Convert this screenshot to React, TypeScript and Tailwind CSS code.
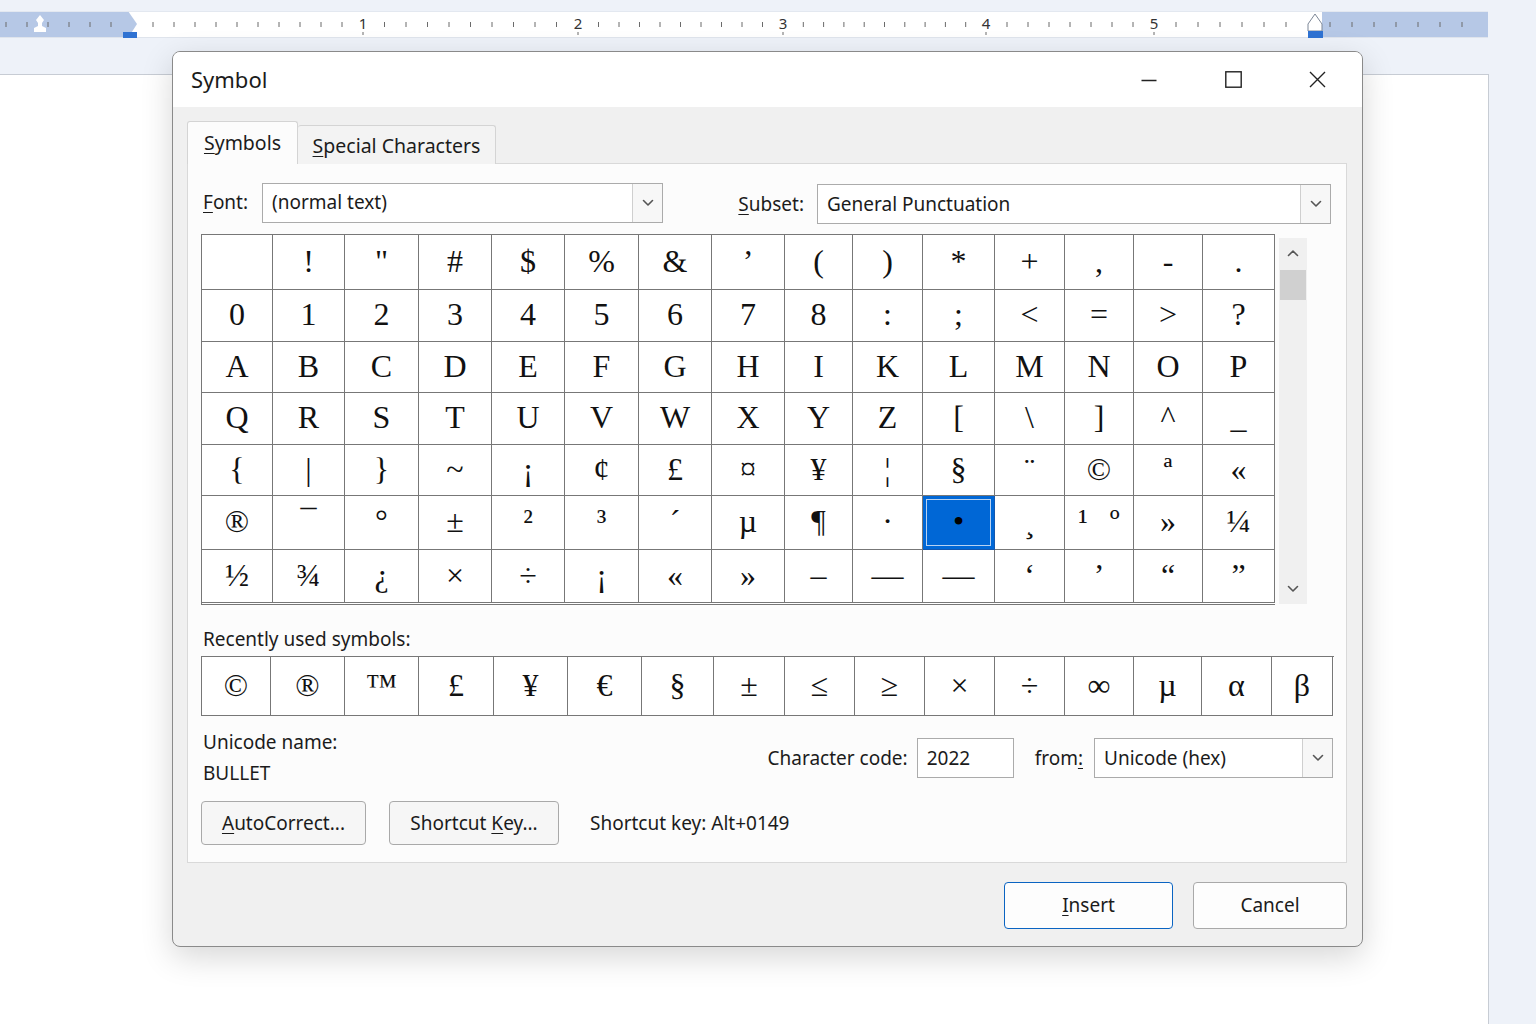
import React from 'react';

const rows: string[][] = [
  ['', '!', '"', '#', '$', '%', '&', '’', '(', ')', '*', '+', ',', '-', '.'],
  ['0', '1', '2', '3', '4', '5', '6', '7', '8', ':', ';', '<', '=', '>', '?'],
  ['A', 'B', 'C', 'D', 'E', 'F', 'G', 'H', 'I', 'K', 'L', 'M', 'N', 'O', 'P'],
  ['Q', 'R', 'S', 'T', 'U', 'V', 'W', 'X', 'Y', 'Z', '[', '\\', ']', '^', '_'],
  ['{', '|', '}', '~', '¡', '¢', '£', '¤', '¥', '¦', '§', '¨', '©', 'ª', '«'],
  ['®', '¯', '°', '±', '²', '³', '´', 'µ', '¶', '·', '•', '¸', '¹º', '»', '¼'],
  ['½', '¾', '¿', '×', '÷', '¡', '«', '»', '–', '—', '—', '‘', '’', '“', '”'],
];

const recent = ['©', '®', '™', '£', '¥', '€', '§', '±', '≤', '≥', '×', '÷', '∞', 'µ', 'α', 'β'];

const Key = ({ children }: { children: React.ReactNode }) => (
  <span className="underline decoration-1 underline-offset-[3px]">{children}</span>
);

const Chevron = ({ up = false }: { up?: boolean }) => (
  <svg width="12" height="8" viewBox="0 0 12 8" fill="none">
    <path d={up ? 'M1.5 6.5 L6 2 L10.5 6.5' : 'M1.5 1.5 L6 6 L10.5 1.5'} stroke="#555" strokeWidth="1.6" strokeLinecap="round" strokeLinejoin="round" />
  </svg>
);

const Combo = ({ value, className }: { value: string; className: string }) => (
  <div className={`flex h-[40px] items-stretch border border-[#ababab] bg-white ${className}`}>
    <div className="flex flex-1 items-center pl-[9px] text-[19px] text-[#1b1b1b]">{value}</div>
    <div className="flex w-[30px] items-center justify-center border-l border-[#cfcfcf] bg-[#f7f7f7]">
      <Chevron />
    </div>
  </div>
);

const Ruler = () => {
  const nums: [number, string][] = [[363, '1'], [578, '2'], [783, '3'], [986, '4'], [1154, '5']];
  const ticks: number[] = [];
  for (let k = 1; k <= 17; k++) ticks.push(363 - 21 * k);
  const segs: [number, number, number][] = [[363, 578, 10], [578, 783, 10], [783, 986, 10], [986, 1154, 8]];
  segs.forEach(([a, b, n]) => {
    for (let i = 1; i < n; i++) ticks.push(a + ((b - a) * i) / n);
  });
  for (let k = 1; k <= 15; k++) ticks.push(1154 + 22 * k);
  const shown = ticks.filter(
    (x) => x > 4 && x < 1484 && Math.abs(x - 137) > 8 && Math.abs(x - 1315) > 9 && Math.abs(x - 40) > 7
  );
  return (
    <svg width="1488" height="27" viewBox="0 0 1488 27" className="block">
      <rect x="0" y="0" width="1488" height="27" fill="#ffffff" />
      <path d="M0 0 H128 L137 13 L128 27 H0 Z" fill="#b6c8e6" />
      <rect x="1322" y="0" width="166" height="27" fill="#b6c8e6" />
      <line x1="0" y1="0.5" x2="1488" y2="0.5" stroke="#e3e8f0" />
      <line x1="0" y1="26.5" x2="1488" y2="26.5" stroke="#dfe4ec" />
      {shown.map((x, i) => (
        <line key={i} x1={x} y1="11" x2={x} y2="16" stroke="#6b6b6b" strokeWidth="1" />
      ))}
      {nums.map(([x, t]) => (
        <g key={t}>
          <text x={x} y="18" textAnchor="middle" fontSize="15" fill="#333" fontFamily="Noto Sans, sans-serif">
            {t}
          </text>
          <line x1={x} y1="21" x2={x} y2="24" stroke="#6b6b6b" />
        </g>
      ))}
      <path d="M40 4 L44 9 L42 12 L42 15 L46 17 L46 21 L34 21 L34 17 L38 15 L38 12 L36 9 Z" fill="#ffffff" />
      <rect x="123" y="21" width="14" height="6" fill="#2f72d2" />
      <path d="M1315 3 L1322 13 L1322 20 L1308 20 L1308 13 Z" fill="#ffffff" stroke="#7d8797" strokeWidth="1" />
      <rect x="1308" y="20" width="15" height="7" fill="#2f72d2" />
    </svg>
  );
};

export default function App() {
  return (
    <div className="relative h-[1024px] w-[1536px] overflow-hidden bg-[#eef2f9] font-['Noto_Sans',sans-serif] text-[#1b1b1b]">
      <div className="pt-[11px]">
        <Ruler />
      </div>
      <div className="mt-[36px] h-[960px] w-[1489px] border-r border-t border-[#c7ccd4] bg-white" />

      {/* Symbol dialog */}
      <div className="absolute left-[172px] top-[51px] flex h-[896px] w-[1191px] flex-col overflow-hidden rounded-[8px] border border-[#8a8a8a] bg-[#f0f0f0] shadow-[0_10px_32px_rgba(0,0,0,0.16)]">
        <div className="flex h-[55px] shrink-0 items-center bg-white">
          <div className="ml-[18px] text-[22px]">Symbol</div>
          <div className="ml-auto mr-[3px] flex h-full">
            <div className="flex w-[84px] items-center justify-center">
              <svg width="16" height="16" viewBox="0 0 16 16">
                <line x1="0.5" y1="8.5" x2="15.5" y2="8.5" stroke="#222" strokeWidth="1.3" />
              </svg>
            </div>
            <div className="flex w-[84px] items-center justify-center">
              <svg width="17" height="17" viewBox="0 0 17 17">
                <rect x="0.8" y="0.8" width="15.4" height="15.4" fill="none" stroke="#222" strokeWidth="1.4" />
              </svg>
            </div>
            <div className="flex w-[84px] items-center justify-center">
              <svg width="17" height="17" viewBox="0 0 17 17">
                <path d="M1 1 L16 16 M16 1 L1 16" stroke="#222" strokeWidth="1.4" />
              </svg>
            </div>
          </div>
        </div>

        <div className="flex flex-1 flex-col pl-[14px] pr-[15px] pt-[14px]">
          {/* tabs */}
          <div className="relative z-10 -mb-px flex h-[43px] items-end">
            <div className="flex h-[43px] w-[111px] items-center justify-center rounded-t-[3px] border border-b-0 border-[#d4d4d4] bg-[#fcfcfc] text-[19.5px]">
              <span>
                <Key>S</Key>ymbols
              </span>
            </div>
            <div className="flex h-[39px] w-[198px] items-center justify-center rounded-t-[3px] border border-b-0 border-l-0 border-[#d4d4d4] bg-[#f3f3f3] text-[19.5px]">
              <span className="pt-[2px]">
                <Key>S</Key>pecial Characters
              </span>
            </div>
          </div>

          <div className="flex h-[700px] flex-col border border-[#d9d9d9] bg-[#fcfcfc] pl-[13px] pr-[15px] pt-[18px]">
            {/* font / subset */}
            <div className="flex h-[41px] items-center">
              <div className="ml-[2px] w-[59px] text-[19px]">
                <Key>F</Key>ont:
              </div>
              <Combo value="(normal text)" className="w-[401px]" />
              <div className="ml-auto mr-[13px] mt-[3px] text-[19px]">
                <Key>S</Key>ubset:
              </div>
              <Combo value="General Punctuation" className="mt-[3px] w-[514px]" />
            </div>

            {/* character grid */}
            <div className="mt-[11px] flex">
              <div className="grid w-[1074px] grid-cols-[71px_72px_74px_73px_73px_74px_73px_73px_68px_70px_72px_70px_69px_69px_72px] grid-rows-[55px_52px_51px_52px_51px_54px_52px] border-b-[3px] border-l border-t border-double border-[#777777] bg-white font-['Liberation_Serif',serif]">
                {rows.map((row, ri) =>
                  row.map((ch, ci) => {
                    const sel = ri === 5 && ci === 10;
                    const last = ri === rows.length - 1;
                    return (
                      <div
                        key={`${ri}-${ci}`}
                        className={`relative flex items-center justify-center border-r border-solid pb-[3px] text-[32px] leading-none ${
                          last ? '' : 'border-b'
                        } ${sel ? 'border-[#1557ad] bg-[#0067d6] text-black' : 'border-[#777777] text-[#111]'}`}
                      >
                        {sel && <div className="absolute inset-[3px] border border-[#b8d2f2]" />}
                        {ch === '¹º' ? (
                          <span className="relative flex gap-[22px]">
                            <span>¹</span>
                            <span>º</span>
                          </span>
                        ) : (
                          <span className="relative">{ch}</span>
                        )}
                      </div>
                    );
                  })
                )}
              </div>
              <div className="ml-[4px] mt-[4px] flex h-[366px] w-[28px] flex-col items-center bg-[#f0f0f0]">
                <div className="mt-[11px]">
                  <Chevron up />
                </div>
                <div className="mt-[13px] h-[30px] w-[26px] bg-[#d0d0d0]" />
                <div className="mt-auto mb-[11px]">
                  <Chevron />
                </div>
              </div>
            </div>

            {/* recently used */}
            <div className="mt-[21px] h-[26px] pl-[2px] text-[19px] leading-[26px]">Recently used symbols:</div>
            <div className="mt-[4px] grid h-[60px] w-[1133px] grid-cols-[69px_74px_74px_75px_74px_74px_72px_71px_70px_70px_70px_70px_69px_68px_70px_61px] border-l border-t border-[#777777] bg-white font-['Liberation_Serif',serif]">
              {recent.map((ch, i) => (
                <div
                  key={i}
                  className="flex items-center justify-center border-b border-r border-[#777777] pb-[2px] text-[32px] leading-none text-[#111]"
                >
                  {ch}
                </div>
              ))}
            </div>

            {/* unicode name + char code */}
            <div className="mt-[11px] flex items-center">
              <div className="ml-[2px] flex flex-col text-[19px]">
                <div className="h-[31px] leading-[31px]">Unicode name:</div>
                <div className="h-[31px] leading-[31px]">BULLET</div>
              </div>
              <div className="ml-auto flex items-center">
                <div className="mr-[9px] text-[19px]">Character code:</div>
                <div className="flex h-[40px] w-[97px] items-center border border-[#ababab] bg-white pl-[9px] text-[19px]">
                  2022
                </div>
                <div className="ml-[21px] mr-[11px] text-[19px]">
                  from<Key>:</Key>
                </div>
                <Combo value="Unicode (hex)" className="mr-[-2px] w-[239px]" />
              </div>
            </div>

            {/* buttons */}
            <div className="mt-[12px] flex items-center">
              <div className="flex h-[44px] w-[165px] items-center justify-center rounded-[4px] border border-[#a9a9a9] bg-[#f6f6f6] text-[19px]">
                <span>
                  <Key>A</Key>utoCorrect...
                </span>
              </div>
              <div className="ml-[23px] flex h-[44px] w-[170px] items-center justify-center rounded-[4px] border border-[#a9a9a9] bg-[#f6f6f6] text-[19px]">
                <span>
                  Shortcut <Key>K</Key>ey...
                </span>
              </div>
              <div className="ml-[31px] text-[19px]">Shortcut key: Alt+0149</div>
            </div>
          </div>

          {/* insert / cancel */}
          <div className="mt-[19px] flex justify-end">
            <div className="flex h-[47px] w-[169px] items-center justify-center rounded-[4px] border-[1.5px] border-[#0a64c2] bg-[#fdfdfd] text-[19px]">
              <span>
                <Key>I</Key>nsert
              </span>
            </div>
            <div className="ml-[20px] flex h-[47px] w-[154px] items-center justify-center rounded-[4px] border border-[#a9a9a9] bg-[#fdfdfd] text-[19px]">
              Cancel
            </div>
          </div>
        </div>
      </div>
    </div>
  );
}
